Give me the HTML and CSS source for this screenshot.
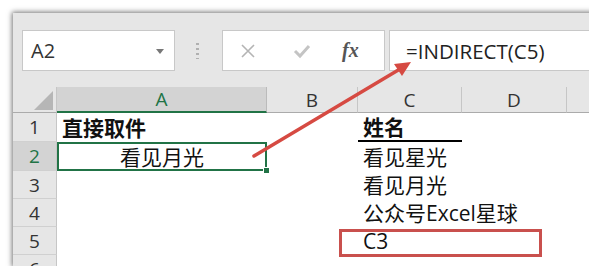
FILE: index.html
```html
<!DOCTYPE html>
<html lang="zh">
<head>
  <meta charset="UTF-8" />
  <title>INDIRECT</title>
  <link rel="stylesheet" href="styles.css">
</head>
<body>
  <div class="window">
    <div class="formula-bar">
      <div class="namebox">
        <span>A2</span>
        <svg class="caret" width="8" height="5" viewBox="0 0 8 5"><path d="M0 0h8L4 5z" fill="#777"/></svg>
      </div>
      <div class="grip"></div>
      <div class="fx-buttons">
        <svg width="16" height="16" viewBox="0 0 16 16"><path d="M2 2l12 12M14 2L2 14" stroke="#b4b4b4" stroke-width="1.6" fill="none"/></svg>
        <svg width="18" height="16" viewBox="0 0 18 16"><path d="M2 8l5 5L16 3" stroke="#c4c4c4" stroke-width="3" fill="none"/></svg>
        <span class="fx">fx</span>
      </div>
      <div class="formula">=INDIRECT(C5)</div>
    </div>

    <div class="sheet">
      <div class="corner"><span class="tri"></span></div>
      <div class="col-hdr selected">A</div>
      <div class="col-hdr">B</div>
      <div class="col-hdr">C</div>
      <div class="col-hdr">D</div>
      <div class="col-hdr last"></div>

      <div class="row-hdr">1</div>
      <div class="cell bold">直接取件</div>
      <div class="cell"></div>
      <div class="cell bold underline">姓名</div>
      <div class="cell"></div>
      <div class="cell"></div>

      <div class="row-hdr selected">2</div>
      <div class="cell active">看见月光</div>
      <div class="cell"></div>
      <div class="cell">看见星光</div>
      <div class="cell"></div>
      <div class="cell"></div>

      <div class="row-hdr">3</div>
      <div class="cell"></div>
      <div class="cell"></div>
      <div class="cell">看见月光</div>
      <div class="cell"></div>
      <div class="cell"></div>

      <div class="row-hdr">4</div>
      <div class="cell"></div>
      <div class="cell"></div>
      <div class="cell">公众号Excel星球</div>
      <div class="cell"></div>
      <div class="cell"></div>

      <div class="row-hdr">5</div>
      <div class="cell"></div>
      <div class="cell"></div>
      <div class="cell">C3</div>
      <div class="cell"></div>
      <div class="cell"></div>

      <div class="row-hdr">6</div>
      <div class="cell"></div>
      <div class="cell"></div>
      <div class="cell"></div>
      <div class="cell"></div>
      <div class="cell"></div>
    </div>
  </div>

  <div class="mark"></div>
  <svg class="arrow" width="589" height="266" viewBox="0 0 589 266">
    <line x1="254" y1="156" x2="400" y2="69" stroke="#d64a42" stroke-width="3.5" stroke-linecap="round"/>
    <path d="M411 62L394 64L402 76Z" fill="#d64a42"/>
  </svg>
</body>
</html>
```

FILE: styles.css
```css
html, body { margin: 0; padding: 0; background: #fff; overflow: hidden; width: 589px; height: 266px; }
body { font-family: "Open Sans", "Noto Sans CJK SC", sans-serif; color: #222; position: relative; }

.window {
  margin: 13px 0 0 13px;
  width: 600px;
  height: 253px;
  overflow: hidden;
  background: #e6e6e6;
  box-shadow: 0 0 5px 1px rgba(0, 0, 0, 0.55);
}

/* formula bar */
.formula-bar { display: flex; align-items: center; height: 41px; padding: 17px 0 16px 9px; }
.namebox {
  background: #fff; border: 1px solid #c8c8c8;
  display: flex; align-items: center; justify-content: space-between; padding: 0 10px 0 8px; box-sizing: border-box; width: 153px; height: 41px;
  font-size: 20px; color: #333;
}
.caret { margin-top: 1px; }
.grip {
  width: 3px; height: 16px; margin: 0 23px 0 21px;
  background: repeating-linear-gradient(#b0b0b0 0 2px, transparent 2px 5px);
}
.fx-buttons {
  width: 163px; height: 41px; box-sizing: border-box; background: #fff; border: 1px solid #c8c8c8;
  display: flex; align-items: center; padding: 0 0 0 17px;
}
.fx-buttons svg:first-child { margin-right: 37px; }
.fx-buttons svg:nth-child(2) { margin-right: 31px; }
.fx { font-family: "Liberation Serif", serif; font-style: italic; font-weight: bold; font-size: 20px; color: #555; }
.formula {
  flex: 1; height: 41px; box-sizing: border-box; margin-left: 4px; background: #fff; border: 1px solid #c8c8c8; border-right: 0;
  display: flex; align-items: center; padding-left: 16px; font-size: 20.5px; color: #222;
}

/* sheet */
.sheet {
  display: grid;
  grid-template-columns: 44px 210px 91px 104px 105px 1fr;
  grid-template-rows: 26px 29px 29px 28px 28px 28px 28px;
  background: #fff;
}
.corner { background: #e6e6e6; border-right: 1px solid #c6c6c6; border-bottom: 1px solid #ababab; position: relative; }
.tri {
  position: absolute; right: 3px; bottom: 2px; width: 0; height: 0;
  border-left: 19px solid transparent; border-bottom: 19px solid #b6b6b6;
}
.col-hdr {
  background: #e6e6e6; border-right: 1px solid #c6c6c6; border-bottom: 1px solid #ababab;
  display: flex; align-items: center; justify-content: center; font-size: 19px; color: #333;
}
.col-hdr.selected { background: #d3d3d3; color: #217346; border-bottom: 2px solid #217346; border-right-color: #bbb; }
.col-hdr.last { border-right: 0; }
.row-hdr {
  background: #e6e6e6; border-right: 1px solid #c6c6c6; border-bottom: 1px solid #d0d0d0;
  display: flex; align-items: center; justify-content: center; font-size: 19px; color: #333;
}
.row-hdr.selected { background: #d3d3d3; color: #217346; }

.cell {
  font-size: 21px; line-height: 1;
  display: flex; align-items: center; padding: 1px 0 0 5px; white-space: nowrap; color: #111; position: relative;
}
.cell.bold { font-weight: bold; }
.cell.underline { border-bottom: 2px solid #000; }
.cell.active {
  justify-content: center; padding-left: 0;
  box-shadow: inset 0 0 0 2px #217346;
}
.cell.active::after {
  content: ""; position: absolute; right: -3px; bottom: -3px; width: 5px; height: 5px;
  background: #217346; border: 1px solid #fff;
}

/* overlays */
.mark {
  position: absolute; left: 339px; top: 229px; width: 197px; height: 22px;
  border: 3px solid #c9504d;
}
.arrow { position: absolute; left: 0; top: 0; pointer-events: none; }
```
